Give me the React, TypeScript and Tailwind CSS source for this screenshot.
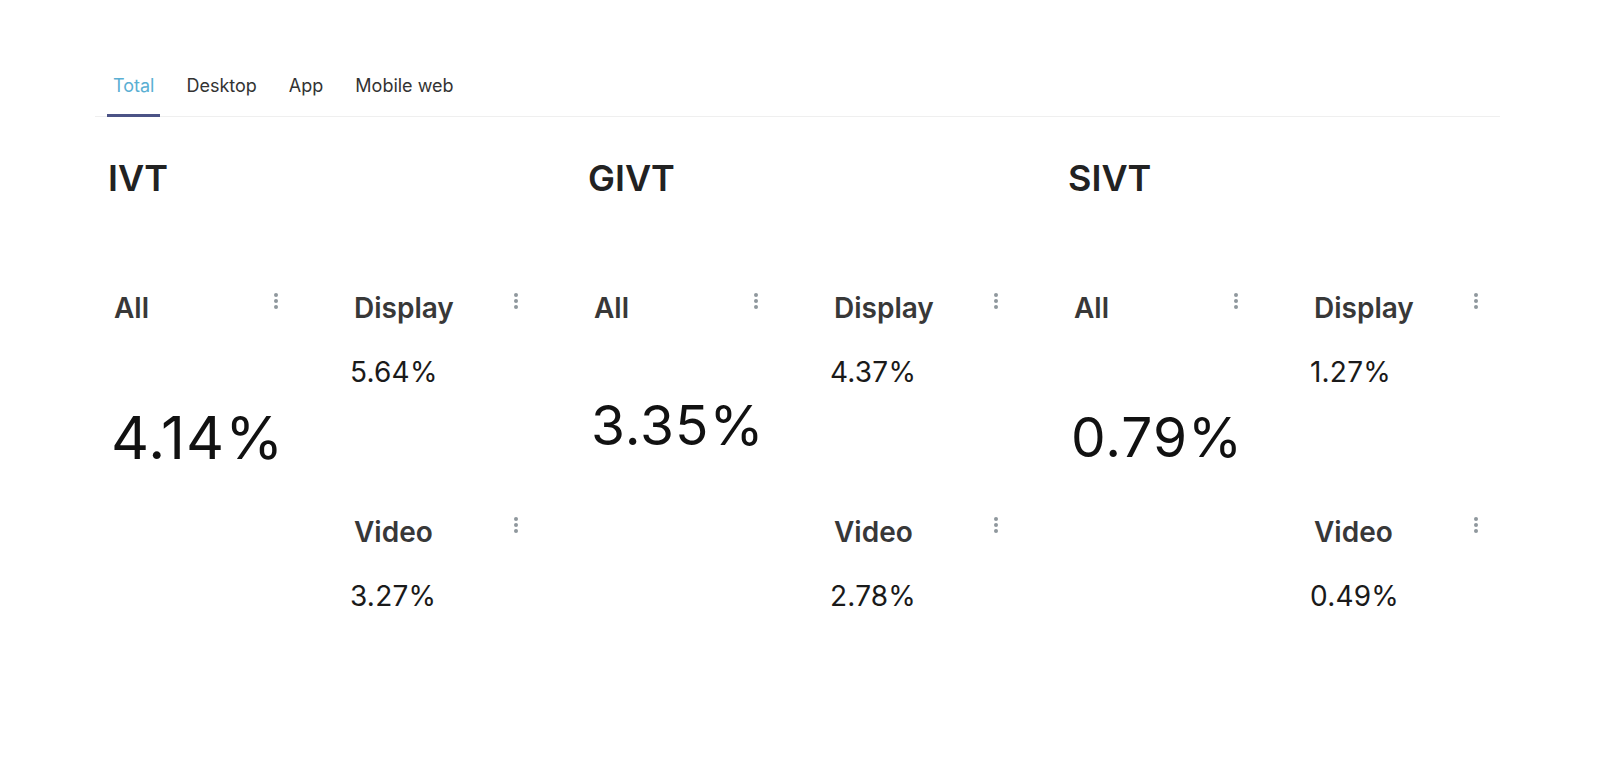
import React from "react";

const Kebab = () => (
  <div className="flex flex-col items-center gap-[2px] pt-[2px] w-[4px]">
    <span className="block w-[4px] h-[4px] rounded-full bg-[#8f989d]" />
    <span className="block w-[4px] h-[4px] rounded-full bg-[#8f989d]" />
    <span className="block w-[4px] h-[4px] rounded-full bg-[#8f989d]" />
  </div>
);

type Metric = {
  title: string;
  all: string;
  allSize: string;
  allMt: string;
  display: string;
  video: string;
};

const metrics: Metric[] = [
  { title: "IVT", all: "4.14%", allSize: "text-[59px]", allMt: "mt-[77px]", display: "5.64%", video: "3.27%" },
  { title: "GIVT", all: "3.35%", allSize: "text-[55px]", allMt: "mt-[67px]", display: "4.37%", video: "2.78%" },
  { title: "SIVT", all: "0.79%", allSize: "text-[55px]", allMt: "mt-[79px]", display: "1.27%", video: "0.49%" },
];

const Label = ({ text }: { text: string }) => (
  <div className="flex justify-between items-start pl-[6px] pr-[6px]">
    <span className="text-[28px] leading-[34px] font-semibold text-[#383838]">{text}</span>
    <Kebab />
  </div>
);

const SmallCard = ({ label, value }: { label: string; value: string }) => (
  <div className="w-[176px] h-[224px]">
    <Label text={label} />
    <div className="mt-[30px] pl-[2px] text-[28px] leading-[34px] text-[#1a1a1a] tracking-[0.2px]">{value}</div>
  </div>
);

export default function App() {
  const tabs = ["Total", "Desktop", "App", "Mobile web"];
  return (
    <div className="w-[1600px] h-[763px] bg-white" style={{ fontFamily: "Inter, 'Noto Sans', sans-serif" }}>
      <div className="pt-[75px] pl-[95px] w-[1500px]">
        <div className="flex gap-[20px] pl-[12px] border-b border-[#efefef]">
          {tabs.map((t, i) => (
            <div
              key={t}
              className={
                i === 0
                  ? "px-[6px] pb-[17px] text-[18px] leading-[22px] text-[#5aafd3] border-b-[3px] border-[#4b5386] -mb-[1px]"
                  : "px-[6px] pb-[17px] text-[18px] leading-[22px] text-[#333333] border-b-[3px] border-transparent -mb-[1px]"
              }
            >
              {t}
            </div>
          ))}
        </div>
        <div className="grid grid-cols-[480px_480px_480px] pl-[13px] pt-[39px]">
          {metrics.map((m) => (
            <div key={m.title}>
              <div className="text-[36px] leading-[44px] font-semibold text-[#222222]">{m.title}</div>
              <div className="mt-[91px] grid grid-cols-[240px_240px]">
                <div className="w-[176px]">
                  <Label text="All" />
                  <div className={`${m.allMt} pl-[3px] ${m.allSize} leading-[1.21] text-[#111111] tracking-[1px]`}>{m.all}</div>
                </div>
                <div className="flex flex-col">
                  <SmallCard label="Display" value={m.display} />
                  <SmallCard label="Video" value={m.video} />
                </div>
              </div>
            </div>
          ))}
        </div>
      </div>
    </div>
  );
}
